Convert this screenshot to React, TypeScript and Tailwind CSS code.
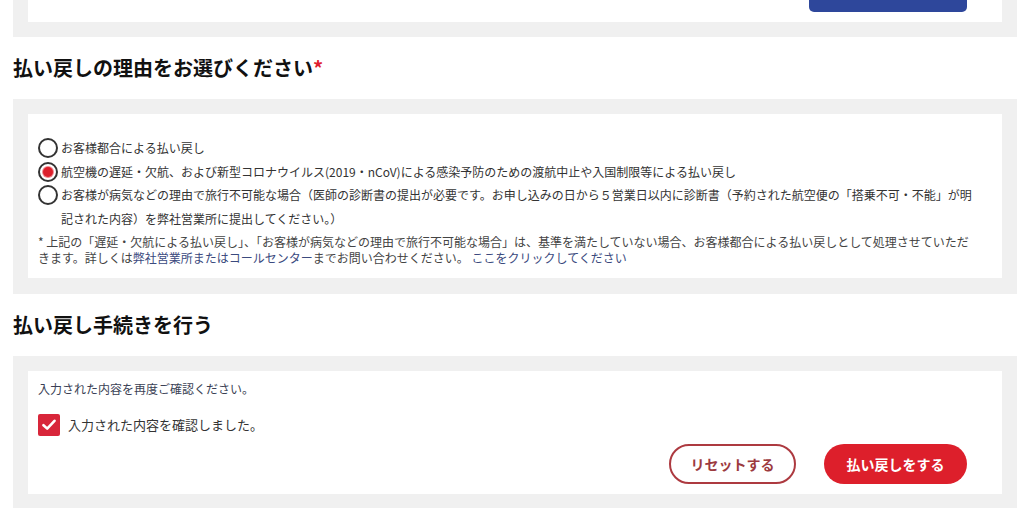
import React from "react";

const font = { fontFamily: '"Noto Sans CJK JP", "Noto Sans", sans-serif' };

function Radio({ checked }: { checked?: boolean }) {
  return (
    <span className="flex h-[20px] w-[20px] shrink-0 items-center justify-center rounded-full border-[2.5px] border-[#333333] bg-white">
      {checked && <span className="h-[10px] w-[10px] rounded-full bg-[#dc1f2b] shadow-[0_0_0_1px_#f08a90]" />}
    </span>
  );
}

export default function App() {
  return (
    <div className="min-h-[531px] bg-white pl-[13px] pr-[17px] text-[#333333]" style={font}>
      {/* top panel */}
      <div className="bg-[#f0f0f0] px-[15px] pb-[15px]">
        <div className="flex justify-end bg-white pb-[10px] pr-[35px]">
          <div className="h-[12px] w-[158px] rounded-b-[5px] bg-[#2e479b]" />
        </div>
      </div>

      <div className="flex h-[62px] items-center">
        <h2 className="text-[20px] font-bold leading-[28px] text-[#111111]">
          払い戻しの理由をお選びください<span className="text-[#e0202e]">*</span>
        </h2>
      </div>

      {/* reasons panel */}
      <div className="bg-[#f0f0f0] px-[15px] pb-[16px] pt-[15px]">
        <div className="bg-white pb-[12px] pl-[10px] pr-[10px] pt-[22px] text-[12px]">
          <label className="flex h-[24px] items-center gap-[3px]">
            <Radio />
            <span className="whitespace-nowrap">お客様都合による払い戻し</span>
          </label>
          <label className="flex h-[23px] items-center gap-[3px]">
            <Radio checked />
            <span className="whitespace-nowrap">
              航空機の遅延・欠航、および新型コロナウイルス(2019・nCoV)による感染予防のための渡航中止や入国制限等による払い戻し
            </span>
          </label>
          <label className="flex items-start gap-[3px]">
            <span className="mt-[2px]">
              <Radio />
            </span>
            <span className="whitespace-nowrap leading-[24px]">
              お客様が病気などの理由で旅行不可能な場合（医師の診断書の提出が必要です。お申し込みの日から５営業日以内に診断書（予約された航空便の「搭乗不可・不能」が明
              <br />
              記された内容）を弊社営業所に提出してください。）
            </span>
          </label>
          <p className="mt-[3px] whitespace-nowrap leading-[16px] text-[#444444]">
            * 上記の「遅延・欠航による払い戻し」、「お客様が病気などの理由で旅行不可能な場合」は、基準を満たしていない場合、お客様都合による払い戻しとして処理させていただ
            <br />
            きます。詳しくは<span className="text-[#3b4a7e]">弊社営業所またはコールセンター</span>までお問い合わせください。 <span className="text-[#3b4a7e]">ここをクリックしてください</span>
          </p>
        </div>
      </div>

      <div className="flex h-[62px] items-center">
        <h2 className="text-[20px] font-bold leading-[28px] text-[#111111]">払い戻し手続きを行う</h2>
      </div>

      {/* confirm panel */}
      <div className="bg-[#f0f0f0] px-[15px] pb-[14px] pt-[15px]">
        <div className="bg-white pb-[10px] pl-[10px] pr-[35px] pt-[9px]">
          <p className="text-[12px] leading-[18px] text-[#3a3f55]">入力された内容を再度ご確認ください。</p>
          <label className="mt-[16px] flex items-center gap-[8px]">
            <span className="flex h-[22px] w-[22px] items-center justify-center rounded-[2px] bg-[#d8263a]">
              <svg width="14" height="12" viewBox="0 0 14 12" fill="none">
                <path d="M1.5 6.2 L5.2 9.6 L12.5 1.8" stroke="white" strokeWidth="2.6" strokeLinecap="round" strokeLinejoin="round" />
              </svg>
            </span>
            <span className="text-[13px] leading-[22px] text-[#333333]">入力された内容を確認しました。</span>
          </label>
          <div className="mt-[8px] flex justify-end gap-[28px]">
            <button className="flex h-[40px] w-[127px] items-center justify-center rounded-full border-2 border-[#ad3a40] bg-white text-[14px] font-bold text-[#9c3a3f]">
              リセットする
            </button>
            <button className="flex h-[40px] w-[143px] items-center justify-center rounded-full bg-[#dd1f2b] text-[14px] font-bold text-white">
              払い戻しをする
            </button>
          </div>
        </div>
      </div>
    </div>
  );
}
